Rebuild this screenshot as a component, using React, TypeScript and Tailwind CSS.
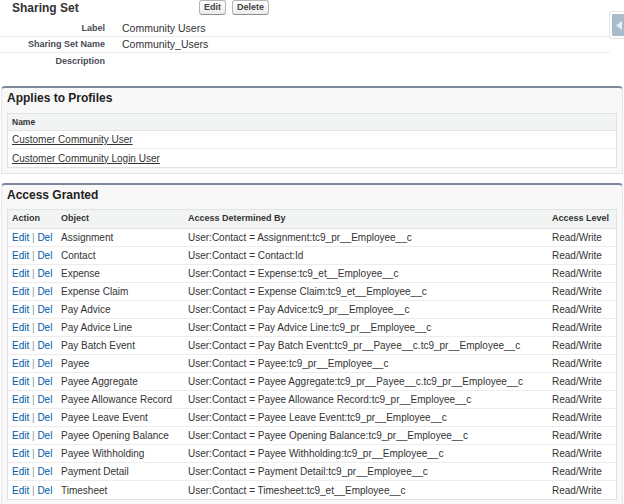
import React from 'react';

const rows: [string, string][] = [
  ['Assignment', 'User:Contact = Assignment:tc9_pr__Employee__c'],
  ['Contact', 'User:Contact = Contact:Id'],
  ['Expense', 'User:Contact = Expense:tc9_et__Employee__c'],
  ['Expense Claim', 'User:Contact = Expense Claim:tc9_et__Employee__c'],
  ['Pay Advice', 'User:Contact = Pay Advice:tc9_pr__Employee__c'],
  ['Pay Advice Line', 'User:Contact = Pay Advice Line:tc9_pr__Employee__c'],
  ['Pay Batch Event', 'User:Contact = Pay Batch Event:tc9_pr__Payee__c.tc9_pr__Employee__c'],
  ['Payee', 'User:Contact = Payee:tc9_pr__Employee__c'],
  ['Payee Aggregate', 'User:Contact = Payee Aggregate:tc9_pr__Payee__c.tc9_pr__Employee__c'],
  ['Payee Allowance Record', 'User:Contact = Payee Allowance Record:tc9_pr__Employee__c'],
  ['Payee Leave Event', 'User:Contact = Payee Leave Event:tc9_pr__Employee__c'],
  ['Payee Opening Balance', 'User:Contact = Payee Opening Balance:tc9_pr__Employee__c'],
  ['Payee Withholding', 'User:Contact = Payee Withholding:tc9_pr__Employee__c'],
  ['Payment Detail', 'User:Contact = Payment Detail:tc9_pr__Employee__c'],
  ['Timesheet', 'User:Contact = Timesheet:tc9_et__Employee__c'],
];

const Btn = ({ label }: { label: string }) => (
  <button className="h-[15px] px-[4px] rounded-[3px] border border-[#b5b5b5] border-b-[#8f8f8f] bg-gradient-to-b from-white to-[#ececec] text-[9px] font-bold text-[#444] leading-[13px]">
    {label}
  </button>
);

export default function App() {
  return (
    <div className="w-[624px] h-[504px] overflow-hidden bg-white text-[#333] font-['Liberation_Sans',Arial,sans-serif]">
      <div className="relative">
        <div className="flex h-[21px] items-start">
          <div className="w-[199px] pl-[12px] pt-[1px] text-[12px] font-bold leading-[14px]">Sharing Set</div>
          <div className="flex gap-[6px]">
            <Btn label="Edit" />
            <Btn label="Delete" />
          </div>
        </div>
        <div className="mr-[14px]">
          <div className="flex h-[16px] items-center border-b border-[#ececec]">
            <div className="w-[105px] text-right text-[9px] font-bold text-[#4a4a56]">Label</div>
            <div className="pl-[17px] text-[10.5px]">Community Users</div>
          </div>
          <div className="flex h-[16px] items-center border-b border-[#ececec]">
            <div className="w-[105px] text-right text-[9px] font-bold text-[#4a4a56]">Sharing Set Name</div>
            <div className="pl-[17px] text-[10.5px]">Community_Users</div>
          </div>
          <div className="flex h-[17px] items-center">
            <div className="w-[105px] text-right text-[9px] font-bold text-[#4a4a56]">Description</div>
          </div>
        </div>
        <div className="absolute right-0 top-[11px] h-[28px] w-[15px] rounded-l-[3px] border border-r-0 border-[#e2e6ea] bg-white pl-[2px] pt-[2px]">
          <div className="flex h-[22px] w-[13px] items-center justify-center bg-[#a9bccb]">
            <svg width="6" height="9" viewBox="0 0 6 9"><path d="M6 0 L0 4.5 L6 9 Z" fill="#e8eef3" /></svg>
          </div>
        </div>
      </div>

      <div className="mt-[16px] mx-[1px] rounded-t-[4px] border border-[#e5e5e5] border-t-2 border-t-[#7d879a] bg-[#f8f8f8] px-[5px] pb-[5px]">
        <div className="h-[25px] pt-[2px] text-[12px] font-bold leading-[16px] text-[#222]">Applies to Profiles</div>
        <div className="border border-[#e0e3e5] bg-white">
          <div className="flex h-[17px] items-center bg-[#f2f3f3] border-b border-[#e0e3e5] pl-[4px] text-[8.5px] font-bold">Name</div>
          <div className="flex h-[18px] items-center border-b border-[#ededed] pl-[4px] text-[10px] underline">Customer Community User</div>
          <div className="flex h-[18px] items-center pl-[4px] text-[10px] underline">Customer Community Login User</div>
        </div>
      </div>

      <div className="mt-[9px] mx-[1px] rounded-t-[4px] border border-[#e5e5e5] border-t-2 border-t-[#7d879a] bg-[#f8f8f8] px-[5px] pb-[5px]">
        <div className="h-[24px] pt-[2px] text-[12px] font-bold leading-[16px] text-[#222]">Access Granted</div>
        <div className="border border-[#e0e3e5] bg-white">
          <div className="flex h-[19px] items-center bg-[#f2f3f3] border-b border-[#e0e3e5] text-[9px] font-bold">
            <div className="w-[53px] pl-[4px]">Action</div>
            <div className="w-[127px]">Object</div>
            <div className="flex-1">Access Determined By</div>
            <div className="w-[64px]">Access Level</div>
          </div>
          {rows.map(([obj, by], i) => (
            <div key={obj} className={`flex h-[18px] items-center text-[10px] ${i < rows.length - 1 ? 'border-b border-[#ededed]' : ''}`}>
              <div className="w-[53px] pl-[4px]">
                <span className="text-[#015ba7]">Edit</span>
                <span className="text-[#999]"> | </span>
                <span className="text-[#015ba7]">Del</span>
              </div>
              <div className="w-[127px]">{obj}</div>
              <div className="flex-1">{by}</div>
              <div className="w-[64px]">Read/Write</div>
            </div>
          ))}
        </div>
      </div>
    </div>
  );
}
